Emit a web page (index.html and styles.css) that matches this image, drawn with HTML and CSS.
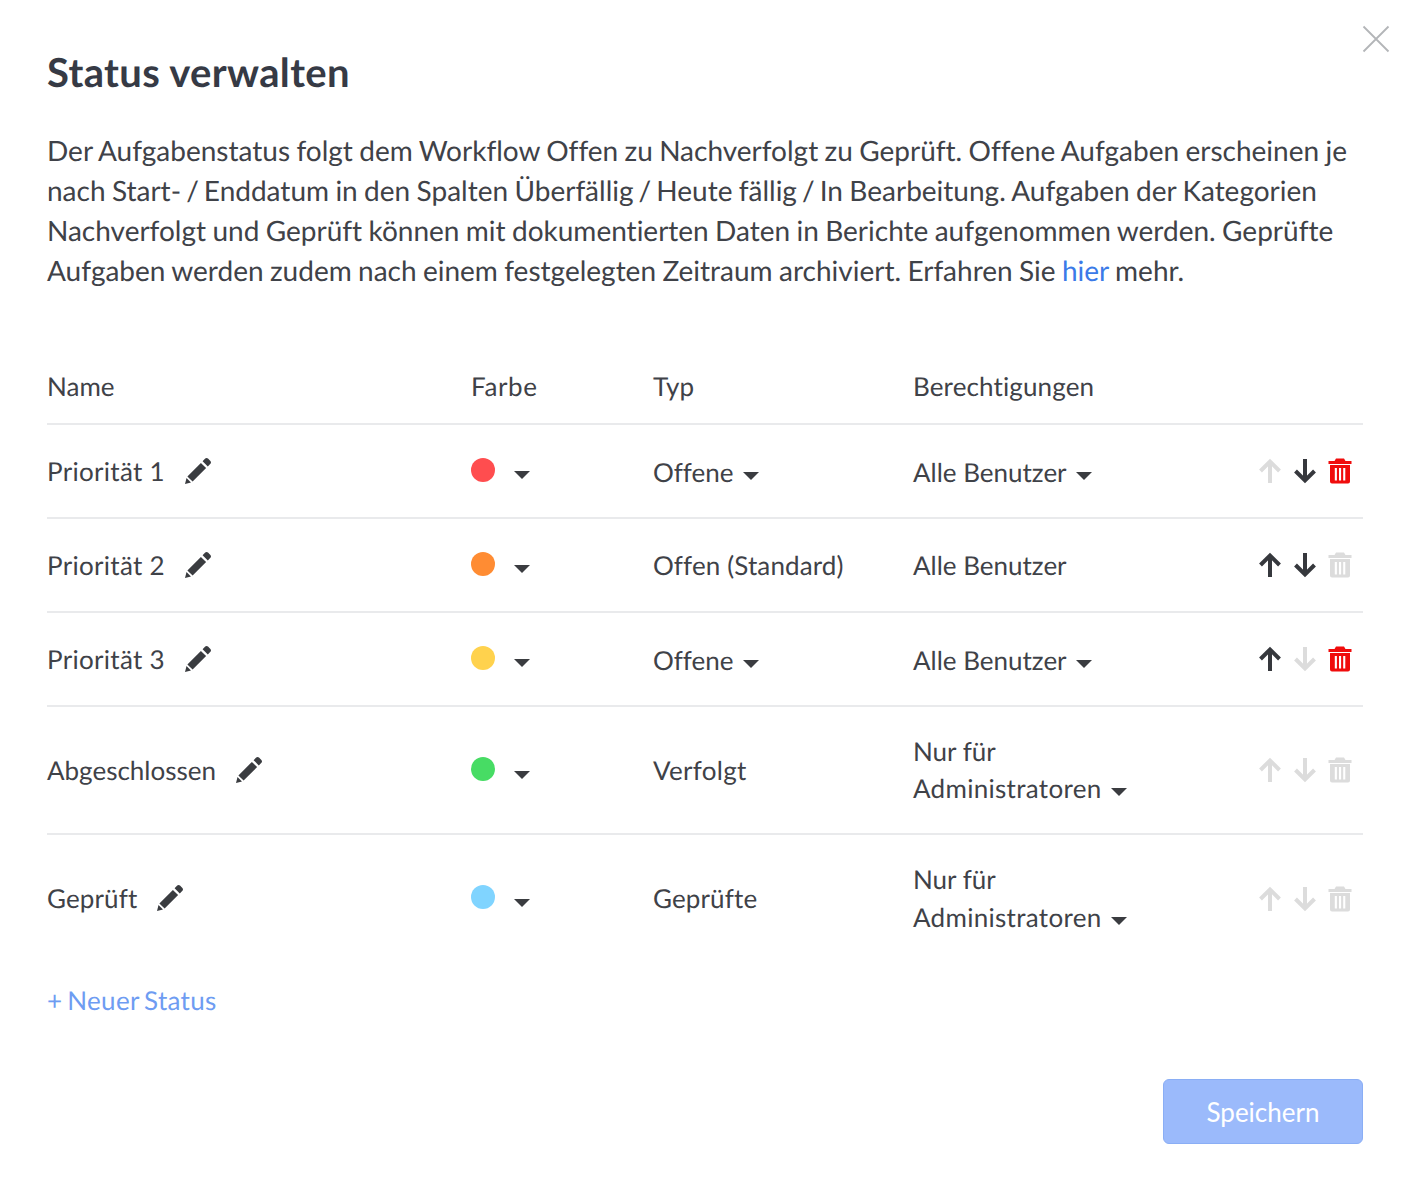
FILE: index.html
```html
<!DOCTYPE html>
<html lang="de">
<head>
<meta charset="utf-8">
<title>Status verwalten</title>
<link rel="stylesheet" href="styles.css">
</head>
<body>
<svg width="0" height="0" class="defs">
  <defs>
    <symbol id="pencil" viewBox="0 0 28 28"><path d="M21.200 1.600c.8-.8 2-.8 2.800 0l2.400 2.400c.8.8.8 2 0 2.800l-2.600 2.600-5.200-5.200zM16.900 5.900l5.200 5.200L8.600 24.600l-5.200-5.200zM2.500 21l4.500 4.500-6 1.500z" fill="currentColor"/></symbol>
    <symbol id="up" viewBox="0 0 24 26"><path d="M12 25V3.500M2.500 13 12 3.500l9.500 9.500" fill="none" stroke="currentColor" stroke-width="4"/></symbol>
    <symbol id="down" viewBox="0 0 24 26"><path d="M12 1v21.500M2.500 13 12 22.500l9.500-9.500" fill="none" stroke="currentColor" stroke-width="4"/></symbol>
    <symbol id="trash" viewBox="0 0 24 26"><path fill-rule="evenodd" d="M8 .5h8l1.500 2.500H23.500v3H.5V3h6zM2 7h20v16.500a2 2 0 0 1-2 2H4a2 2 0 0 1-2-2zM6.800 10v12.500h2.100V10zM11 10v12.500h2.100V10zM15.200 10v12.500h2.100V10z" fill="currentColor"/></symbol>
  </defs>
</svg>
<main class="modal">
  <button class="close" type="button" aria-label="Schließen"><svg width="28" height="28" viewBox="0 0 28 28"><path d="M1.500 1.500l25 25M26.500 1.500l-25 25" stroke="currentColor" stroke-width="1.800" fill="none"/></svg></button>
  <h1 class="title">Status verwalten</h1>
  <p class="intro">Der Aufgabenstatus folgt dem Workflow Offen zu Nachverfolgt zu Geprüft. Offene Aufgaben erscheinen je nach Start-<span class="slash"> / </span>Enddatum in den Spalten Überfällig<span class="slash"> / </span>Heute fällig<span class="slash"> / </span>In Bearbeitung. Aufgaben der Kategorien Nachverfolgt und Geprüft können mit dokumentierten Daten in Berichte aufgenommen werden. Geprüfte Aufgaben werden zudem nach einem festgelegten Zeitraum archiviert. Erfahren Sie <a href="#" class="link">hier</a> mehr.</p>

  <section class="table">
    <div class="row head">
      <div>Name</div><div class="wider">Farbe</div><div>Typ</div><div class="slight">Berechtigungen</div><div></div>
    </div>

    <div class="row">
      <div class="name"><span class="wide">Priorität 1</span><svg class="pencil"><use href="#pencil"/></svg></div>
      <div class="color"><span class="dot red"></span><span class="caret"></span></div>
      <div class="select">Offene<span class="caret small"></span></div>
      <div class="select">Alle Benutzer<span class="caret small"></span></div>
      <div class="actions"><svg class="ico off"><use href="#up"/></svg><svg class="ico"><use href="#down"/></svg><svg class="ico del"><use href="#trash"/></svg></div>
    </div>

    <div class="row">
      <div class="name"><span class="wide">Priorität 2</span><svg class="pencil"><use href="#pencil"/></svg></div>
      <div class="color"><span class="dot orange"></span><span class="caret"></span></div>
      <div class="slight">Offen (Standard)</div>
      <div>Alle Benutzer</div>
      <div class="actions"><svg class="ico"><use href="#up"/></svg><svg class="ico"><use href="#down"/></svg><svg class="ico off"><use href="#trash"/></svg></div>
    </div>

    <div class="row">
      <div class="name"><span class="wide">Priorität 3</span><svg class="pencil"><use href="#pencil"/></svg></div>
      <div class="color"><span class="dot yellow"></span><span class="caret"></span></div>
      <div class="select">Offene<span class="caret small"></span></div>
      <div class="select">Alle Benutzer<span class="caret small"></span></div>
      <div class="actions"><svg class="ico"><use href="#up"/></svg><svg class="ico off"><use href="#down"/></svg><svg class="ico del"><use href="#trash"/></svg></div>
    </div>

    <div class="row tall">
      <div class="name">Abgeschlossen<svg class="pencil"><use href="#pencil"/></svg></div>
      <div class="color"><span class="dot green"></span><span class="caret"></span></div>
      <div class="wide">Verfolgt</div>
      <div class="perm">Nur für <span class="wide">Administratoren</span><span class="caret small"></span></div>
      <div class="actions"><svg class="ico off"><use href="#up"/></svg><svg class="ico off"><use href="#down"/></svg><svg class="ico off"><use href="#trash"/></svg></div>
    </div>

    <div class="row tall last">
      <div class="name"><span class="slight">Geprüft</span><svg class="pencil"><use href="#pencil"/></svg></div>
      <div class="color"><span class="dot blue"></span><span class="caret"></span></div>
      <div class="slight">Geprüfte</div>
      <div class="perm">Nur für <span class="wide">Administratoren</span><span class="caret small"></span></div>
      <div class="actions"><svg class="ico off"><use href="#up"/></svg><svg class="ico off"><use href="#down"/></svg><svg class="ico off"><use href="#trash"/></svg></div>
    </div>
  </section>

  <a href="#" class="new">+ Neuer Status</a>

  <footer class="footer"><button class="save" type="button">Speichern</button></footer>
</main>
</body>
</html>
```

FILE: styles.css
```css
* { box-sizing: border-box; }
html, body { margin: 0; padding: 0; background: #fff; }
body { font-family: Lato, "Open Sans", sans-serif; color: #3f4248; font-size: 26px; line-height: 38px; text-rendering: geometricPrecision; font-variant-ligatures: none; }
.defs { position: absolute; }
.modal { position: relative; width: 1412px; height: 1188px; padding: 47px 49px 0 47px; display: flex; flex-direction: column; }
.close { position: absolute; top: 25px; left: 1362px; width: 28px; height: 28px; padding: 0; border: 0; background: none; color: #b3b5b8; }
.close svg { display: block; }
.title { margin: 0; font-size: 40px; line-height: 50px; font-weight: 700; color: #363a45; letter-spacing: .35px; }
.intro { margin: 33px 0 0; font-size: 28px; line-height: 40px; color: #3f4248; word-spacing: -0.8px; }
.slash { word-spacing: -2.1px; }
.link { color: #3b7ae8; text-decoration: none; }
.table { margin-top: 60px; }
.row { display: grid; grid-template-columns: 424px 182px 260px 1fr 190px; align-items: center; height: 94px; border-bottom: 2px solid #e9eaec; }
.row.head { height: 75px; padding-bottom: 1px; }
.row.tall { height: 128px; }
.row.last { border-bottom-color: transparent; }
.wide { letter-spacing: .3px; }
.wider { letter-spacing: .6px; }
.slight { letter-spacing: .13px; }
.name { display: flex; align-items: center; }
.pencil { width: 28px; height: 28px; margin-left: 19px; color: #3a3c40; }
.color { display: flex; align-items: center; }
.dot { width: 24px; height: 24px; border-radius: 50%; margin-top: -3px; margin-right: 1px; }
.red { background: #ff4d4f; }
.orange { background: #ff8c33; }
.yellow { background: #ffd24d; }
.green { background: #47dc64; }
.blue { background: #80d4ff; }
.caret { display: inline-block; width: 0; height: 0; margin-left: 18px; margin-top: 7px; border-left: 8px solid transparent; border-right: 8px solid transparent; border-top: 8px solid #3a3c40; }
.tall .color .caret { margin-top: 9px; }
.caret.small { margin-left: 9.500px; vertical-align: 2px; }
.select { padding-top: 2px; }
.perm { max-width: 240px; line-height: 37.5px; }
.last .perm { line-height: 38px; }
.actions { display: flex; align-items: center; justify-content: flex-end; gap: 11px; padding-right: 11px; margin-top: -1px; }
.last .actions { margin-top: 1px; }
.ico { width: 24px; height: 26px; color: #36383d; }
.ico.off { color: #dcdcdc; }
.ico.del { color: #f00c0c; }
.new { margin-top: 18px; color: #6e9cf2; text-decoration: none; word-spacing: -2px; letter-spacing: .3px; }
.footer { display: flex; justify-content: flex-end; margin-top: 60px; }
.save { width: 200px; height: 65px; border: 1px solid #8aaef5; border-radius: 6px; background: #9bbafb; color: #fff; font: inherit; }
```
